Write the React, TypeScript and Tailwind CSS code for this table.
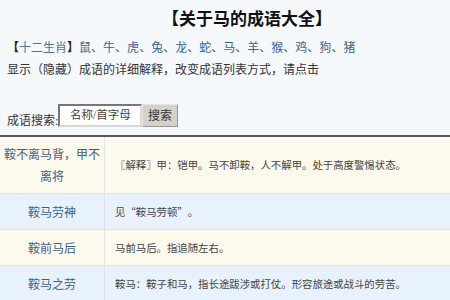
import React from "react";

const animals = ["鼠", "牛", "虎", "兔", "龙", "蛇", "马", "羊", "猴", "鸡", "狗", "猪"];

// Full-width punctuation box, so brackets and quotes take a whole cell
function P({ c }: { c: string }) {
  return <span className="inline-block w-[1em] text-center">{c}</span>;
}

const rows: { name: string; desc: React.ReactNode; tall: boolean; tone: string }[] = [
  {
    name: "鞍不离马背，甲不离将",
    desc: (
      <>
        <P c="〖" />解释<P c="〗" />甲：铠甲。马不卸鞍，人不解甲。处于高度警惕状态。
      </>
    ),
    tall: true,
    tone: "bg-[#fdf9ec]",
  },
  {
    name: "鞍马劳神",
    desc: (
      <>
        见<P c="“" />鞍马劳顿<P c="”" />。
      </>
    ),
    tall: false,
    tone: "bg-[#e7f2fc]",
  },
  { name: "鞍前马后", desc: "马前马后。指追随左右。", tall: false, tone: "bg-[#fdf9ec]" },
  {
    name: "鞍马之劳",
    desc: "鞍马：鞍子和马，指长途跋涉或打仗。形容旅途或战斗的劳苦。",
    tall: false,
    tone: "bg-[#e7f2fc]",
  },
];

export default function App() {
  return (
    <div className="w-[450px] h-[300px] overflow-hidden bg-[#f6f9fc] font-['Liberation_Serif','Noto_Sans_CJK_SC',serif] text-[#333]">
      <h1 className="pt-[6px] pl-[44px] text-center text-[17px] leading-[24px] font-bold text-[#111] font-['Noto_Sans_CJK_SC',sans-serif]">
        【关于马的成语大全】
      </h1>

      <div className="mt-[7px] pl-[7px] text-[12px] leading-[22px]">
        <p className="whitespace-nowrap">
          <span className="font-bold text-[#222]">【</span>
          <span className="text-[#4a72a6]">十二生肖</span>
          <span className="font-bold text-[#222]">】</span>
          {animals.map((a, i) => (
            <span key={a}>
              <span className="text-[#3d5f8e]">{a}</span>
              {i < animals.length - 1 && <span className="text-[#555]">、</span>}
            </span>
          ))}
        </p>
        <p className="whitespace-nowrap text-[#333]">显示（隐藏）成语的详细解释，改变成语列表方式，请点击</p>
      </div>

      <div className="mt-[23px] flex items-end pl-[7px] text-[12px]">
        <span className="-mb-[2px] w-[51px] whitespace-nowrap leading-[16px] text-[#333]">成语搜索:</span>
        <div className="h-[23px] w-[84px] border-2 border-t-[#777] border-l-[#777] border-b-[#d8d8d8] border-r-[#d8d8d8] bg-white pl-[10px] pt-[1px] text-[11.5px] leading-[16px] text-[#444]">
          名称/首字母
        </div>
        <div className="flex h-[23px] w-[36px] items-center justify-center border border-[#e8e6e2] border-b-[#9a968f] border-r-[#9a968f] bg-[#d5d2cc] text-[12px] text-[#333]">
          搜索
        </div>
      </div>

      <div className="mt-[8px] border-t-2 border-[#5a5a5a]">
        {rows.map((r) => (
          <div
            key={r.name}
            className={`flex border-b border-[#dfe4ea] ${r.tone} ${r.tall ? "h-[57px]" : "h-[36px]"}`}
          >
            <div className="flex w-[105px] shrink-0 items-center justify-center border-r border-[#dfe4ea] px-[1px] pt-[2px] text-center text-[12px] leading-[22px] text-[#3d5f8e]">
              {r.name}
            </div>
            <div className="flex items-center whitespace-nowrap pl-[10px] font-['Noto_Sans_CJK_SC',sans-serif] text-[10.4px] leading-[16px] text-[#444]">
              <span>{r.desc}</span>
            </div>
          </div>
        ))}
      </div>
    </div>
  );
}
